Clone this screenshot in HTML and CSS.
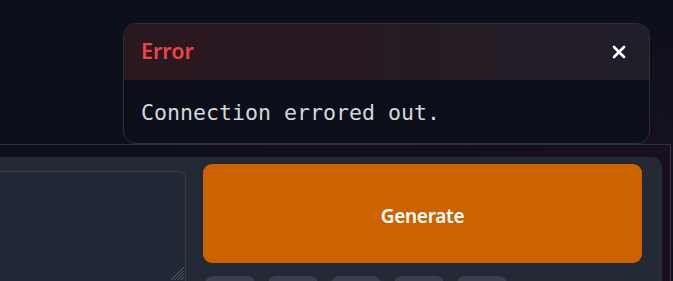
FILE: index.html
```html
<!DOCTYPE html>
<html lang="en">
<head>
<meta charset="utf-8">
<title>Error</title>
<link rel="stylesheet" href="styles.css">
</head>
<body>
<div class="page">
  <div class="top"></div>
  <div class="workspace">
    <div class="panel">
      <div class="input-col">
        <div class="textarea">
          <svg class="grip" width="17" height="17" viewBox="0 0 17 17">
            <line x1="16" y1="3" x2="3" y2="16" stroke="#5d6476" stroke-width="1"/>
            <line x1="16" y1="6.5" x2="6.5" y2="16" stroke="#5d6476" stroke-width="1"/>
            <line x1="16" y1="10" x2="10" y2="16" stroke="#5d6476" stroke-width="1"/>
            <line x1="16" y1="13" x2="13" y2="16" stroke="#5d6476" stroke-width="1"/>
          </svg>
        </div>
      </div>
      <div class="action-col">
        <button class="generate">Generate</button>
        <div class="pills">
          <span class="pill"></span>
          <span class="pill"></span>
          <span class="pill"></span>
          <span class="pill"></span>
          <span class="pill"></span>
        </div>
      </div>
    </div>
  </div>
  <div class="toast">
    <div class="toast-head">
      <span class="toast-title">Error</span>
      <svg class="close" width="14" height="14" viewBox="0 0 14 14">
        <line x1="2" y1="2" x2="12" y2="12" stroke="#ffffff" stroke-width="2.6" stroke-linecap="round"/>
        <line x1="12" y1="2" x2="2" y2="12" stroke="#ffffff" stroke-width="2.6" stroke-linecap="round"/>
      </svg>
    </div>
    <div class="toast-body">Connection errored out.</div>
  </div>
</div>
</body>
</html>
```

FILE: styles.css
```css
* { box-sizing: border-box; }
html, body { margin: 0; padding: 0; }
body {
  background: #0d0f1a;
  font-family: "Noto Sans", "Liberation Sans", sans-serif;
  overflow: hidden;
}
.page {
  position: relative;
  width: 673px;
  height: 281px;
  overflow: hidden;
  background:
    radial-gradient(ellipse 420px 200px at 560px 150px, rgba(36, 20, 38, 0.5), rgba(13, 15, 26, 0) 70%),
    #0d0f1a;
}
.top { height: 144px; }
.workspace {
  width: 671px;
  height: 137px;
  border-top: 1px solid #2c3142;
  border-right: 1px solid #353a4b;
  padding: 12px 8px 0 0;
  background: linear-gradient(90deg, rgba(13, 15, 26, 0.9) 0%, rgba(24, 16, 30, 0.9) 100%);
}
.panel {
  display: flex;
  align-items: flex-start;
  gap: 17px;
  width: 662px;
  height: 130px;
  padding: 7px 20px 0 0;
  background: #242936;
  border-radius: 0 10px 0 0;
  overflow: hidden;
}
.input-col { width: 186px; flex: none; }
.textarea {
  position: relative;
  margin-top: 7px;
  height: 112px;
  background: #212735;
  border: 1px solid #363c4c;
  border-left: none;
  border-radius: 0 8px 0 0;
}
.grip { position: absolute; right: 0; bottom: 1px; }
.action-col { flex: 1; display: flex; flex-direction: column; }
.generate {
  flex: none;
  height: 99px;
  border: none;
  border-radius: 9px;
  background: #cd6200;
  color: #ffffff;
  font-family: "Noto Sans", "Liberation Sans", sans-serif;
  font-weight: 600;
  font-size: 19px;
  letter-spacing: -0.3px;
  padding: 4px 0 0 0;
}
.pills {
  flex: none;
  display: flex;
  gap: 13px;
  margin-top: 13px;
  padding-left: 2px;
}
.pill {
  width: 50px;
  height: 20px;
  border-radius: 8px;
  background: #394050;
}
.toast {
  position: absolute;
  left: 123px;
  top: 23px;
  width: 527px;
  height: 121px;
  border: 1px solid #2a2f3e;
  border-radius: 13px;
  overflow: hidden;
  background: #0c0f1a;
}
.toast-head {
  height: 56px;
  display: flex;
  align-items: center;
  justify-content: space-between;
  padding: 0 23px 0 17px;
  background: linear-gradient(90deg, #2a1820 0%, #271a23 45%, #221f2a 100%);
}
.toast-title {
  color: #ef4444;
  font-weight: 600;
  font-size: 21.5px;
  line-height: 1;
  padding-bottom: 2px;
}
.close { display: block; }
.toast-body {
  padding: 20px 17px 0 17px;
  color: #d4d6dc;
  font-family: "DejaVu Sans Mono", "Liberation Mono", monospace;
  font-size: 21.6px;
  line-height: 26px;
}
```
